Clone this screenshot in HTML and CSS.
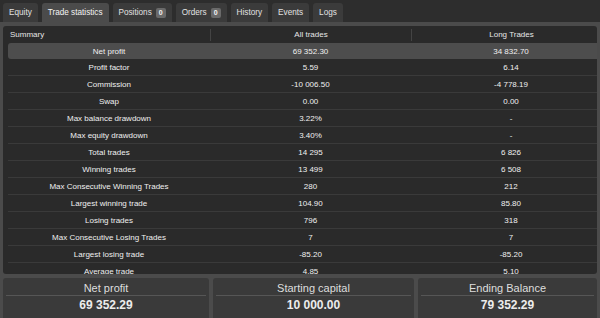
FILE: index.html
```html
<!DOCTYPE html>
<html>
<head>
<meta charset="utf-8">
<link rel="stylesheet" href="styles.css">
</head>
<body>
<div class="tabs">
  <div class="tab">Equity</div>
  <div class="tab active">Trade statistics</div>
  <div class="tab">Positions <span class="badge">0</span></div>
  <div class="tab">Orders <span class="badge">0</span></div>
  <div class="tab">History</div>
  <div class="tab">Events</div>
  <div class="tab">Logs</div>
</div>
<div class="main">
  <div class="panel">
    <div class="table">
      <div class="row head">
        <div class="cell left">Summary</div>
        <div class="cell sep">All trades</div>
        <div class="cell sep">Long Trades</div>
      </div>
      <div class="row hl"><div class="cell">Net profit</div><div class="cell">69 352.30</div><div class="cell">34 832.70</div></div>
      <div class="row"><div class="cell">Profit factor</div><div class="cell">5.59</div><div class="cell">6.14</div></div>
      <div class="row"><div class="cell">Commission</div><div class="cell">-10 006.50</div><div class="cell">-4 778.19</div></div>
      <div class="row"><div class="cell">Swap</div><div class="cell">0.00</div><div class="cell">0.00</div></div>
      <div class="row"><div class="cell">Max balance drawdown</div><div class="cell">3.22%</div><div class="cell">-</div></div>
      <div class="row"><div class="cell">Max equity drawdown</div><div class="cell">3.40%</div><div class="cell">-</div></div>
      <div class="row"><div class="cell">Total trades</div><div class="cell">14 295</div><div class="cell">6 826</div></div>
      <div class="row"><div class="cell">Winning trades</div><div class="cell">13 499</div><div class="cell">6 508</div></div>
      <div class="row"><div class="cell">Max Consecutive Winning Trades</div><div class="cell">280</div><div class="cell">212</div></div>
      <div class="row"><div class="cell">Largest winning trade</div><div class="cell">104.90</div><div class="cell">85.80</div></div>
      <div class="row"><div class="cell">Losing trades</div><div class="cell">796</div><div class="cell">318</div></div>
      <div class="row"><div class="cell">Max Consecutive Losing Trades</div><div class="cell">7</div><div class="cell">7</div></div>
      <div class="row"><div class="cell">Largest losing trade</div><div class="cell">-85.20</div><div class="cell">-85.20</div></div>
      <div class="row"><div class="cell">Average trade</div><div class="cell">4.85</div><div class="cell">5.10</div></div>
    </div>
  </div>
  <div class="cards">
    <div class="card"><div class="card-title">Net profit</div><div class="card-value">69 352.29</div></div>
    <div class="card"><div class="card-title">Starting capital</div><div class="card-value">10 000.00</div></div>
    <div class="card"><div class="card-title">Ending Balance</div><div class="card-value">79 352.29</div></div>
  </div>
</div>
</body>
</html>
```
FILE: styles.css
```css
* { box-sizing: border-box; }
html, body { margin: 0; padding: 0; }
body {
  width: 600px;
  height: 318px;
  overflow: hidden;
  background: #2c2c2c;
  font-family: "Liberation Sans", Arial, sans-serif;
  color: #f0f0f0;
}
.tabs {
  height: 22px;
  display: flex;
  align-items: flex-end;
  gap: 4px;
  padding-left: 3px;
  background: #2d2d2d;
}
.tab {
  height: 19px;
  display: flex;
  align-items: center;
  gap: 4px;
  padding: 0 6px;
  background: #3b3b3b;
  border-radius: 3px 3px 0 0;
  font-size: 8.2px;
  color: #e2e2e2;
}
.tab.active {
  background: #4b4b4b;
  color: #f4f4f4;
}
.badge {
  display: inline-block;
  background: #6a6a6a;
  color: #f4f4f4;
  font-size: 7px;
  font-weight: bold;
  padding: 1px 3px;
  border-radius: 2px;
  line-height: 8px;
}
.main {
  background: #4b4b4b;
  padding: 4px 3px 0 3px;
  height: 296px;
  display: flex;
  flex-direction: column;
  gap: 4px;
}
.panel {
  background: #2a2a2a;
  border-radius: 3px;
  height: 248px;
  overflow: hidden;
  padding-left: 5px;
  flex: none;
}
.table {
  width: 603px;
}
.row {
  display: grid;
  grid-template-columns: 202px 201px 200px;
  height: 17px;
  align-items: center;
  font-size: 8px;
  border-bottom: 1px solid #3a3a3a;
}
.row.head {
  border-bottom: none;
  height: 17px;
  color: #e6e6e6;
}
.row.hl {
  background: #4d4d4d;
  border-radius: 3px;
  border-bottom: none;
  height: 16px;
}
.cell {
  text-align: center;
  white-space: nowrap;
}
.cell.left {
  text-align: left;
  padding-left: 2px;
}
.cell.sep {
  border-left: 1px solid #444;
  line-height: 12px;
}
.cards {
  display: grid;
  grid-template-columns: 206px 201px 1fr;
  gap: 4px;
  flex: 1;
}
.card {
  background: #3a3a3a;
  border-radius: 3px 3px 0 0;
  padding: 3px 3px 0;
  text-align: center;
}
.card-title {
  font-size: 11px;
  color: #dedede;
  height: 15px;
  line-height: 14px;
  border-bottom: 1px solid #565656;
}
.card-value {
  font-size: 12px;
  font-weight: bold;
  color: #ececec;
  line-height: 18px;
}
```
